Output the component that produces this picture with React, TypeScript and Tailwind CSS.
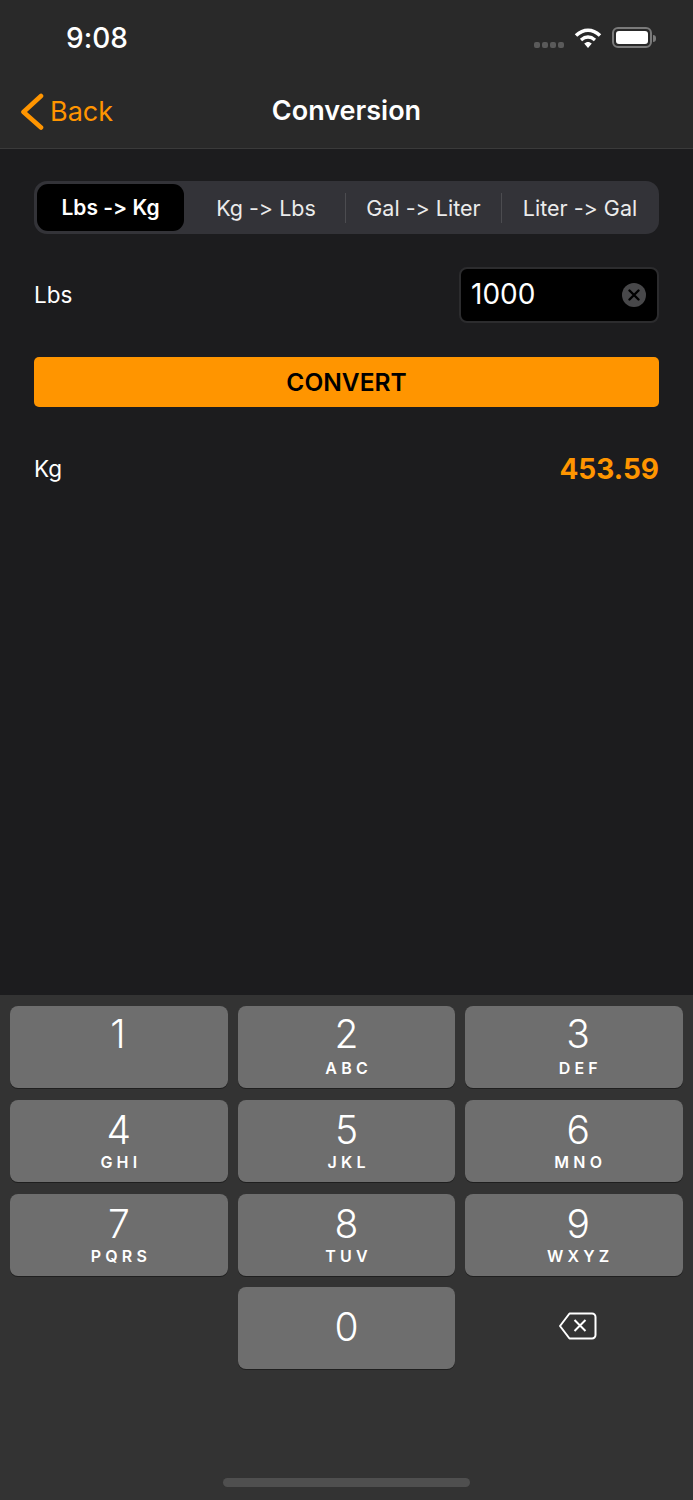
const keys = [
  { n: "1", l: "", c: "mr-[2px]" },
  { n: "2", l: "ABC", c: "" },
  { n: "3", l: "DEF", c: "ml-[8px]" },
  { n: "4", l: "GHI", c: "" },
  { n: "5", l: "JKL", c: "" },
  { n: "6", l: "MNO", c: "ml-[8px]" },
  { n: "7", l: "PQRS", c: "" },
  { n: "8", l: "TUV", c: "" },
  { n: "9", l: "WXYZ", c: "ml-[8px]" },
];

const Key = ({ n, l, c }: { n: string; l: string; c: string }) => (
  <div className="h-[82px] rounded-[8px] bg-[#6e6e6e] shadow-[0_1px_0_#1f1f1f] flex flex-col items-center text-white">
    <div className={`flex flex-col items-center ${c}`}>
      <span className={`text-[39px] leading-[46px] font-[350] ${n === "1" || n === "2" || n === "3" ? "mt-[5px] mb-[2px]" : "mt-[7px]"}`}>{n}</span>
      {l && <span className="text-[16px] leading-[18px] font-semibold tracking-[4.2px] mr-[-4.2px]">{l}</span>}
    </div>
  </div>
);

const StatusBar = () => (
  <div className="h-[76px] flex items-center justify-between pl-[66px] pr-[37px]">
    <span className="text-[28px] font-medium text-white">9:08</span>
    <div className="flex items-center">
      <div className="flex gap-[2px] mt-[14px] mr-[10px]">
        <span className="w-[6px] h-[6px] rounded-[2px] bg-[#5a5a5a]" />
        <span className="w-[6px] h-[6px] rounded-[2px] bg-[#5a5a5a]" />
        <span className="w-[6px] h-[6px] rounded-[2px] bg-[#5a5a5a]" />
        <span className="w-[6px] h-[6px] rounded-[2px] bg-[#5a5a5a]" />
      </div>
      <svg width="28" height="22" viewBox="0 0 28 22" className="mr-[10px] mt-[-1px]">
        <path d="M2 8.5C9.5 1.5 18.5 1.5 26 8.5" fill="none" stroke="#fff" strokeWidth="3.6" />
        <path d="M7 13C11.5 9.2 16.5 9.2 21 13" fill="none" stroke="#fff" strokeWidth="3.4" />
        <path d="M10.2 16.6C12.6 14.4 15.4 14.4 17.8 16.6L14 21Z" fill="#fff" />
      </svg>
      <div className="w-[40px] h-[21px] rounded-[6px] border-2 border-[#7a7a7a] p-[2px] mt-[-1px]">
        <div className="w-full h-full rounded-[3px] bg-white" />
      </div>
      <span className="w-[3px] h-[7px] rounded-r-full bg-[#7a7a7a] ml-[1px]" />
    </div>
  </div>
);

export default function App() {
  return (
    <div
      className="w-[693px] h-[1500px] flex flex-col bg-[#1c1c1e] [font-feature-settings:'calt'_0]"
      style={{ fontFamily: "Inter, 'Liberation Sans', sans-serif" }}
    >
      <header className="h-[149px] bg-[#292929] border-b border-[#3a3a3a] shrink-0">
        <StatusBar />
        <div className="relative h-[70px] flex items-center justify-center">
          <div className="absolute left-[20px] top-[16px] flex items-center text-[#ff9500]">
            <svg width="24" height="38" viewBox="0 0 24 38" fill="none" stroke="#ff9500" className="mr-[6px]">
              <path d="M21 3L3.5 19L21 34.5" strokeWidth="4.6" strokeLinecap="round" strokeLinejoin="round" />
            </svg>
            <span className="text-[27px] leading-[38px] pt-px">Back</span>
          </div>
          <span className="text-[27px] font-semibold text-white pt-px">Conversion</span>
        </div>
      </header>

      <main className="flex-1 px-[34px] pt-[32px]">
        <div className="h-[53px] rounded-[13px] bg-[#333338] p-[3px] flex items-center text-[21.5px] text-[#ebebeb]">
          <div className="w-[147px] h-[47px] rounded-[11px] bg-black text-white text-[21px] font-semibold flex items-center justify-center pt-px">Lbs -&gt; Kg</div>
          <div className="w-[161px] flex justify-center pt-px pl-[3px]">Kg -&gt; Lbs</div>
          <div className="w-px h-[30px] bg-[#4c4c50]" />
          <div className="w-[155px] flex justify-center pt-px">Gal -&gt; Liter</div>
          <div className="w-px h-[30px] bg-[#4c4c50]" />
          <div className="flex-1 flex justify-center pt-px pl-[2px]">Liter -&gt; Gal</div>
        </div>

        <div className="mt-[33px] flex items-center justify-between">
          <span className="text-[22.5px] text-white">Lbs</span>
          <div className="w-[200px] h-[56px] rounded-[8px] bg-black border-2 border-[#2c2c2e] flex items-center justify-between pl-[10px] pr-[11px]">
            <span className="text-[28px] text-white mt-[-2px]">1000</span>
            <div className="w-[24px] h-[24px] rounded-full bg-[#48484a] flex items-center justify-center">
              <svg width="12" height="12" viewBox="0 0 12 12">
                <path d="M1.5 1.5L10.5 10.5M10.5 1.5L1.5 10.5" stroke="#000" strokeWidth="2.4" strokeLinecap="round" />
              </svg>
            </div>
          </div>
        </div>

        <button className="mt-[34px] w-full h-[50px] rounded-[5px] bg-[#ff9500] text-black text-[24.5px] font-semibold flex items-center justify-center">
          CONVERT
        </button>

        <div className="mt-[41px] flex items-center justify-between">
          <span className="text-[22.5px] text-white">Kg</span>
          <span className="text-[28px] font-bold text-[#ff9500]">453.59</span>
        </div>
      </main>

      <div className="h-[505px] shrink-0 bg-[#333333] relative px-[10px] pt-[11px]">
        <div className="grid grid-cols-3 gap-x-[10px] gap-y-[12px]">
          {keys.map((k) => (
            <Key key={k.n} n={k.n} l={k.l} c={k.c} />
          ))}
          <div />
          <div className="h-[82px] mt-[-1px] pb-[2px] rounded-[8px] bg-[#6e6e6e] shadow-[0_1px_0_#1f1f1f] flex items-center justify-center text-white text-[39px] font-[350]">0</div>
          <div className="h-[82px] mt-[-1px] flex items-center justify-center">
            <svg width="40" height="30" viewBox="0 0 40 30" fill="none" stroke="#fff" className="ml-[8px] mt-[-4px]">
              <path d="M11.5 2.5H34a3.5 3.5 0 0 1 3.5 3.5V24a3.5 3.5 0 0 1-3.5 3.5H11.5L2 15Z" strokeWidth="2" strokeLinejoin="round" />
              <path d="M16.5 9L27.5 20M27.5 9L16.5 20" strokeWidth="2" />
            </svg>
          </div>
        </div>
        <div className="absolute left-[223px] bottom-[13px] w-[247px] h-[9px] rounded-full bg-[#4f4f4f]" />
      </div>
    </div>
  );
}
